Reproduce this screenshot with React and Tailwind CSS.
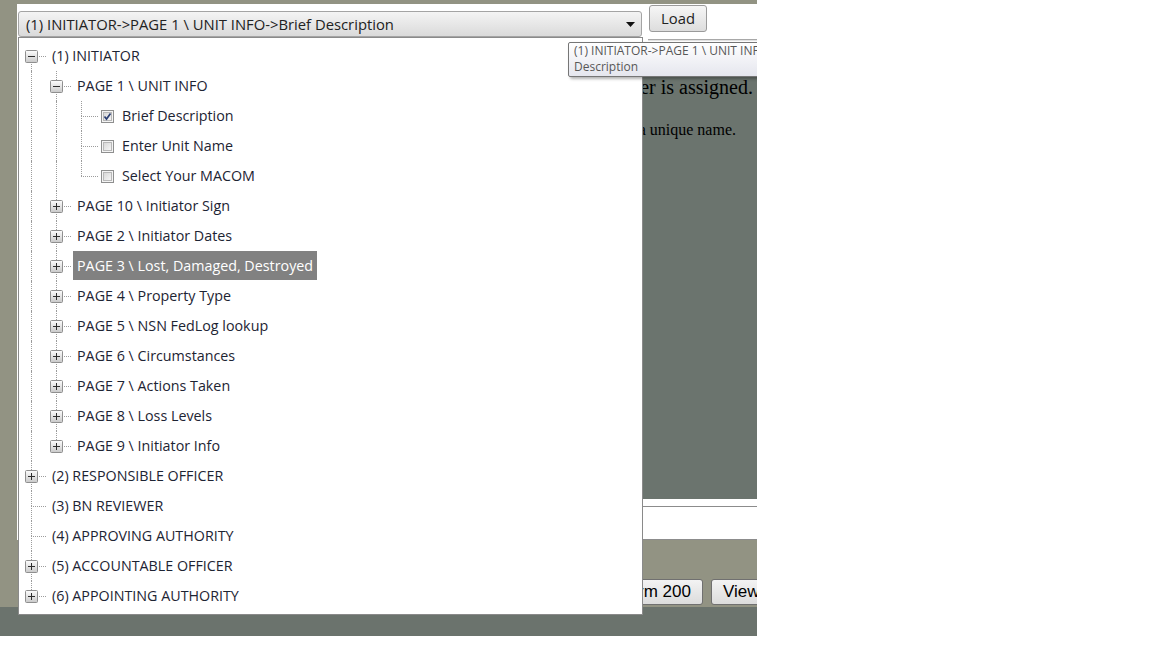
import React from "react";

const TREE = [
  {
    label: "(1) INITIATOR",
    open: true,
    children: [
      {
        label: "PAGE 1 \\ UNIT INFO",
        open: true,
        children: [
          { label: "Brief Description", check: true, checked: true },
          { label: "Enter Unit Name", check: true },
          { label: "Select Your MACOM", check: true },
        ],
      },
      { label: "PAGE 10 \\ Initiator Sign", more: true },
      { label: "PAGE 2 \\ Initiator Dates", more: true },
      { label: "PAGE 3 \\ Lost, Damaged, Destroyed", more: true, selected: true },
      { label: "PAGE 4 \\ Property Type", more: true },
      { label: "PAGE 5 \\ NSN FedLog lookup", more: true },
      { label: "PAGE 6 \\ Circumstances", more: true },
      { label: "PAGE 7 \\ Actions Taken", more: true },
      { label: "PAGE 8 \\ Loss Levels", more: true },
      { label: "PAGE 9 \\ Initiator Info", more: true },
    ],
  },
  { label: "(2) RESPONSIBLE OFFICER", more: true },
  { label: "(3) BN REVIEWER" },
  { label: "(4) APPROVING AUTHORITY" },
  { label: "(5) ACCOUNTABLE OFFICER", more: true },
  { label: "(6) APPOINTING AUTHORITY", more: true },
];

// flatten the tree into visible rows, keeping track of which ancestor
// levels still need a guide line running down past this row
function flatten(nodes, guides = [], out = []) {
  nodes.forEach((node, i) => {
    const hasNext = i < nodes.length - 1;
    out.push({
      node,
      guides,
      hasNext,
      firstRoot: guides.length === 0 && i === 0,
    });
    if (node.open && node.children) {
      flatten(node.children, [...guides, hasNext], out);
    }
  });
  return out;
}

function Expander({ open }) {
  return (
    <svg width="13" height="13" viewBox="0 0 13 13" className="absolute left-[6px] top-[9px]">
      <defs>
        <linearGradient id="exp-bg" x1="0" y1="0" x2="0" y2="1">
          <stop offset="0" stopColor="#fdfdfd" />
          <stop offset="1" stopColor="#c9c9c9" />
        </linearGradient>
      </defs>
      <rect x="0.5" y="0.5" width="12" height="12" rx="1" fill="url(#exp-bg)" stroke="#8f8f8f" />
      <path d="M3 6.5h7" stroke="#2d2d2d" />
      {!open && <path d="M6.5 3v7" stroke="#2d2d2d" />}
    </svg>
  );
}

function Checkbox({ checked }) {
  return (
    <svg width="13" height="13" viewBox="0 0 13 13" className="ml-[7px] shrink-0">
      <defs>
        <linearGradient id="chk-bg" x1="0" y1="0" x2="1" y2="1">
          <stop offset="0" stopColor="#d6d6d6" />
          <stop offset="1" stopColor="#f7f7f7" />
        </linearGradient>
      </defs>
      <rect x="0.5" y="0.5" width="12" height="12" fill="#f4f4f4" stroke="#8e8f8f" />
      <rect x="2.5" y="2.5" width="8" height="8" fill="url(#chk-bg)" stroke="#b8b8b8" />
      {checked && (
        <path d="M3.5 6.5l2 2.5 4-5.5" fill="none" stroke="#2b3f73" strokeWidth="1.7" />
      )}
    </svg>
  );
}

function TreeRow({ row }) {
  const { node, guides, hasNext, firstRoot } = row;
  const line = "absolute border-dotted border-[#9c9c9c]";
  return (
    <div className="flex h-[30px] items-center">
      {guides.map((g, i) => (
        <div key={i} className="relative h-full w-[25px] shrink-0">
          {g && <div className={`${line} left-[12px] top-0 bottom-0 border-l`} />}
        </div>
      ))}
      <div className="relative h-full w-[25px] shrink-0">
        {!firstRoot && <div className={`${line} left-[12px] top-0 h-[15px] border-l`} />}
        {hasNext && <div className={`${line} left-[12px] top-[15px] bottom-0 border-l`} />}
        <div
          className={`${line} left-[12px] top-[15px] border-t ${
            node.check ? "right-[-4px]" : "right-[-2px]"
          }`}
        />
        {(node.more || node.children) && <Expander open={node.open} />}
      </div>
      {node.check && <Checkbox checked={node.checked} />}
      <span
        className={`ml-[4px] flex h-[29px] items-center self-start whitespace-nowrap px-[4px] pt-px ${
          node.selected ? "bg-[#818181] text-white" : "text-[#1d2433]"
        }`}
      >
        {node.label}
      </span>
    </div>
  );
}

export default function App() {
  const rows = flatten(TREE);
  return (
    <div className="relative h-[636px] w-[757px] overflow-hidden bg-[#929383] font-['Open_Sans',sans-serif] text-[14.3px]">
      <div className="flex h-full flex-col">
        <div className="ml-[17px] mt-[4px] flex h-[536px] flex-col bg-white">
          <div className="flex items-start">
            <div className="ml-px mt-[7px] flex h-[26px] w-[624px] items-center justify-between rounded-[3px] border border-[#a4a4a4] bg-gradient-to-b from-[#f4f4f4] to-[#dadada] pl-[7px] pr-[6px] text-[14.8px] text-[#222]">
              <span>(1) INITIATOR-&gt;PAGE 1 \ UNIT INFO-&gt;Brief Description</span>
              <svg width="9" height="5" viewBox="0 0 9 5">
                <path d="M0 0h9L4.5 5z" fill="#111" />
              </svg>
            </div>
            <button className="ml-[7px] mt-px h-[27px] w-[58px] rounded-[3px] border border-[#9a9a9a] bg-gradient-to-b from-[#f6f6f6] to-[#dddddd] text-[14.8px] text-[#222]">
              Load
            </button>
          </div>
          <div className="ml-[631px] mt-[2px] h-[2px] border-t border-[#a8a8a8] bg-[#e2e2e2]" />
          <div className="ml-[180px] mt-[31px] flex h-[427px] flex-col items-end bg-[#6b746e] pt-[3px] font-['Liberation_Serif',serif] text-black">
            <p className="mr-[4px] whitespace-nowrap text-[20px] leading-[24px]">
              A Form number is assigned.
            </p>
            <p className="mr-[21px] mt-[21px] whitespace-nowrap text-[16px] leading-[20px]">
              Give each unit a unique name.
            </p>
          </div>
          <div className="mt-[7px] ml-[180px] flex-1 border-y border-[#8c8c8c] bg-white" />
        </div>
        <div className="flex h-[67px] items-start justify-end gap-[8px] pl-[17px] pt-[39px] font-['Liberation_Sans',Arial,sans-serif] text-[17px] text-black">
          <button className="h-[26px] shrink-0 rounded-[3px] border border-[#707070] bg-gradient-to-b from-[#f3f3f3] to-[#dcdcdc] px-[11px] leading-[24px]">
            Print Form 200
          </button>
          <button className="-mr-[64px] h-[26px] w-[110px] shrink-0 rounded-[3px] border border-[#707070] bg-gradient-to-b from-[#f3f3f3] to-[#dcdcdc] pl-[11px] text-left leading-[24px]">
            View PDF
          </button>
        </div>
        <div className="flex-1 bg-[#6b736d]" />
      </div>

      {/* open dropdown tree */}
      <div className="absolute left-[18px] top-[37px] h-[578px] w-[625px] border border-[#8a8a8a] bg-white pt-[3px]">
        {rows.map((row, i) => (
          <TreeRow key={i} row={row} />
        ))}
      </div>

      {/* hover tooltip */}
      <div className="absolute left-[568px] top-[42px] h-[35px] w-[230px] rounded-[2px] border border-[#767676] bg-gradient-to-b from-white to-[#e5e6ee] pl-[5px] text-[12px] leading-[16px] text-[#575757] shadow-[2px_2px_3px_rgba(0,0,0,0.3)]">
        <div className="whitespace-nowrap">(1) INITIATOR-&gt;PAGE 1 \ UNIT INFO-&gt;Brief</div>
        <div>Description</div>
      </div>
    </div>
  );
}
